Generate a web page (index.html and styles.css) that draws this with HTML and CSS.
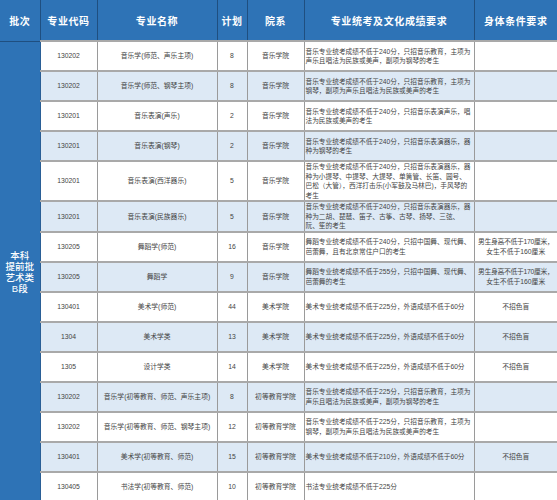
FILE: index.html
```html
<!DOCTYPE html>
<html lang="zh">
<head>
<meta charset="utf-8">
<link rel="stylesheet" href="styles.css">
</head>
<body>
<table class="plan">
  <colgroup>
    <col class="c-batch"><col class="c-code"><col class="c-name"><col class="c-num"><col class="c-dept"><col class="c-req"><col class="c-body">
  </colgroup>
  <thead>
    <tr class="head">
      <th>批次</th><th>专业代码</th><th>专业名称</th><th>计划</th><th>院系</th><th>专业统考及文化成绩要求</th><th>身体条件要求</th>
    </tr>
  </thead>
  <tbody>
    <tr>
      <td class="batch" rowspan="15">本科<br>提前批<br>艺术类<br>B段</td>
      <td>130202</td><td>音乐学(师范、声乐主项)</td><td>8</td><td>音乐学院</td>
      <td class="req">音乐专业统考成绩不低于240分，只招音乐教育，主项为声乐且唱法为民族或美声，副项为钢琴的考生</td><td></td>
    </tr>
    <tr class="alt">
      <td>130202</td><td>音乐学(师范、钢琴主项)</td><td>8</td><td>音乐学院</td>
      <td class="req">音乐专业统考成绩不低于240分，只招音乐教育，主项为钢琴，副项为声乐且唱法为民族或美声的考生</td><td></td>
    </tr>
    <tr>
      <td>130201</td><td>音乐表演(声乐)</td><td>2</td><td>音乐学院</td>
      <td class="req">音乐专业统考成绩不低于240分，只招音乐表演声乐，唱法为民族或美声的考生</td><td></td>
    </tr>
    <tr class="alt">
      <td>130201</td><td>音乐表演(钢琴)</td><td>2</td><td>音乐学院</td>
      <td class="req">音乐专业统考成绩不低于240分，只招音乐表演器乐，器种为钢琴的考生</td><td></td>
    </tr>
    <tr class="tall">
      <td>130201</td><td>音乐表演(西洋器乐)</td><td>5</td><td>音乐学院</td>
      <td class="req">音乐专业统考成绩不低于240分，只招音乐表演器乐，器种为小提琴、中提琴、大提琴、单簧管、长笛、圆号、巴松（大管），西洋打击乐(小军鼓及马林巴)，手风琴的考生</td><td></td>
    </tr>
    <tr class="alt">
      <td>130201</td><td>音乐表演(民族器乐)</td><td>5</td><td>音乐学院</td>
      <td class="req">音乐专业统考成绩不低于240分，只招音乐表演器乐，器种为二胡、琵琶、笛子、古筝、古琴、扬琴、三弦、阮、笙的考生</td><td></td>
    </tr>
    <tr>
      <td>130205</td><td>舞蹈学(师范)</td><td>16</td><td>音乐学院</td>
      <td class="req">舞蹈专业统考成绩不低于240分，只招中国舞、现代舞、芭蕾舞，且有北京常住户口的考生</td>
      <td class="phys"><span class="line">男生身高不低于170厘米，</span><br>女生不低于160厘米</td>
    </tr>
    <tr class="alt">
      <td>130205</td><td>舞蹈学</td><td>9</td><td>音乐学院</td>
      <td class="req">舞蹈专业统考成绩不低于255分，只招中国舞、现代舞、芭蕾舞的考生</td>
      <td class="phys"><span class="line">男生身高不低于170厘米，</span><br>女生不低于160厘米</td>
    </tr>
    <tr>
      <td>130401</td><td>美术学(师范)</td><td>44</td><td>美术学院</td>
      <td class="req">美术专业统考成绩不低于225分，外语成绩不低于60分</td><td>不招色盲</td>
    </tr>
    <tr class="alt">
      <td>1304</td><td>美术学类</td><td>13</td><td>美术学院</td>
      <td class="req">美术专业统考成绩不低于225分，外语成绩不低于60分</td><td>不招色盲</td>
    </tr>
    <tr>
      <td>1305</td><td>设计学类</td><td>14</td><td>美术学院</td>
      <td class="req">美术专业统考成绩不低于225分，外语成绩不低于60分</td><td>不招色盲</td>
    </tr>
    <tr class="alt">
      <td>130202</td><td>音乐学(初等教育、师范、声乐主项)</td><td>8</td><td>初等教育学院</td>
      <td class="req">音乐专业统考成绩不低于225分，只招音乐教育，主项为声乐且唱法为民族或美声，副项为钢琴的考生</td><td></td>
    </tr>
    <tr>
      <td>130202</td><td>音乐学(初等教育、师范、钢琴主项)</td><td>12</td><td>初等教育学院</td>
      <td class="req">音乐专业统考成绩不低于225分，只招音乐教育，主项为钢琴，副项为声乐且唱法为民族或美声的考生</td><td></td>
    </tr>
    <tr class="alt">
      <td>130401</td><td>美术学(初等教育、师范)</td><td>15</td><td>初等教育学院</td>
      <td class="req">美术专业统考成绩不低于210分，外语成绩不低于60分</td><td>不招色盲</td>
    </tr>
    <tr>
      <td>130405</td><td>书法学(初等教育、师范)</td><td>10</td><td>初等教育学院</td>
      <td class="req">书法专业统考成绩不低于225分</td><td></td>
    </tr>
  </tbody>
</table>
</body>
</html>
```

FILE: styles.css
```css
html, body {
  margin: 0;
  padding: 0;
  background: #ffffff;
}

.plan {
  width: 557px;
  border-collapse: collapse;
  table-layout: fixed;
  font-family: "Liberation Sans", "Noto Sans CJK SC", sans-serif;
}

.c-batch { width: 40px; }
.c-code { width: 57px; }
.c-name { width: 120px; }
.c-num { width: 30px; }
.c-dept { width: 57px; }
.c-req { width: 170px; }
.c-body { width: 83px; }

.head th {
  height: 40px;
  padding: 0;
  background: #2e73b6;
  color: #ffffff;
  font-family: "Noto Sans CJK SC", sans-serif;
  font-weight: 700;
  font-size: 10px;
  letter-spacing: 0.6px;
  border-left: 1px solid #1f4f80;
  border-right: 1px solid #1f4f80;
  border-bottom: 1px solid #1f4f80;
}

.head th:first-child { border-left: none; }
.head th:last-child { border-right: none; }

tbody tr { height: 30px; }
tbody tr.tall { height: 40px; }

tbody td {
  padding: 0 2px;
  font-size: 6.8px;
  line-height: 9.5px;
  color: #444444;
  text-align: center;
  vertical-align: middle;
  border: 1px solid #9a9a9a;
  border-top: 2px solid #a9a9a9;
  overflow: hidden;
}

tbody tr.alt td { background: #dde9f5; }

tbody td.req {
  text-align: left;
  font-size: 6.7px;
  padding: 0 1px 0 1px;
}

tbody td.phys {
  padding: 0;
}

.phys .line {
  white-space: nowrap;
  letter-spacing: -0.3px;
}

tbody td.batch,
tbody tr.alt td.batch {
  background: #2e73b6;
  color: #ffffff;
  font-family: "Liberation Sans", "Noto Sans CJK SC", sans-serif;
  font-weight: 500;
  font-size: 9.5px;
  line-height: 11px;
  border: none;
  border-right: 1px solid #2a5f96;
  padding: 0;
}

tbody td:last-child { border-right: none; }
```
